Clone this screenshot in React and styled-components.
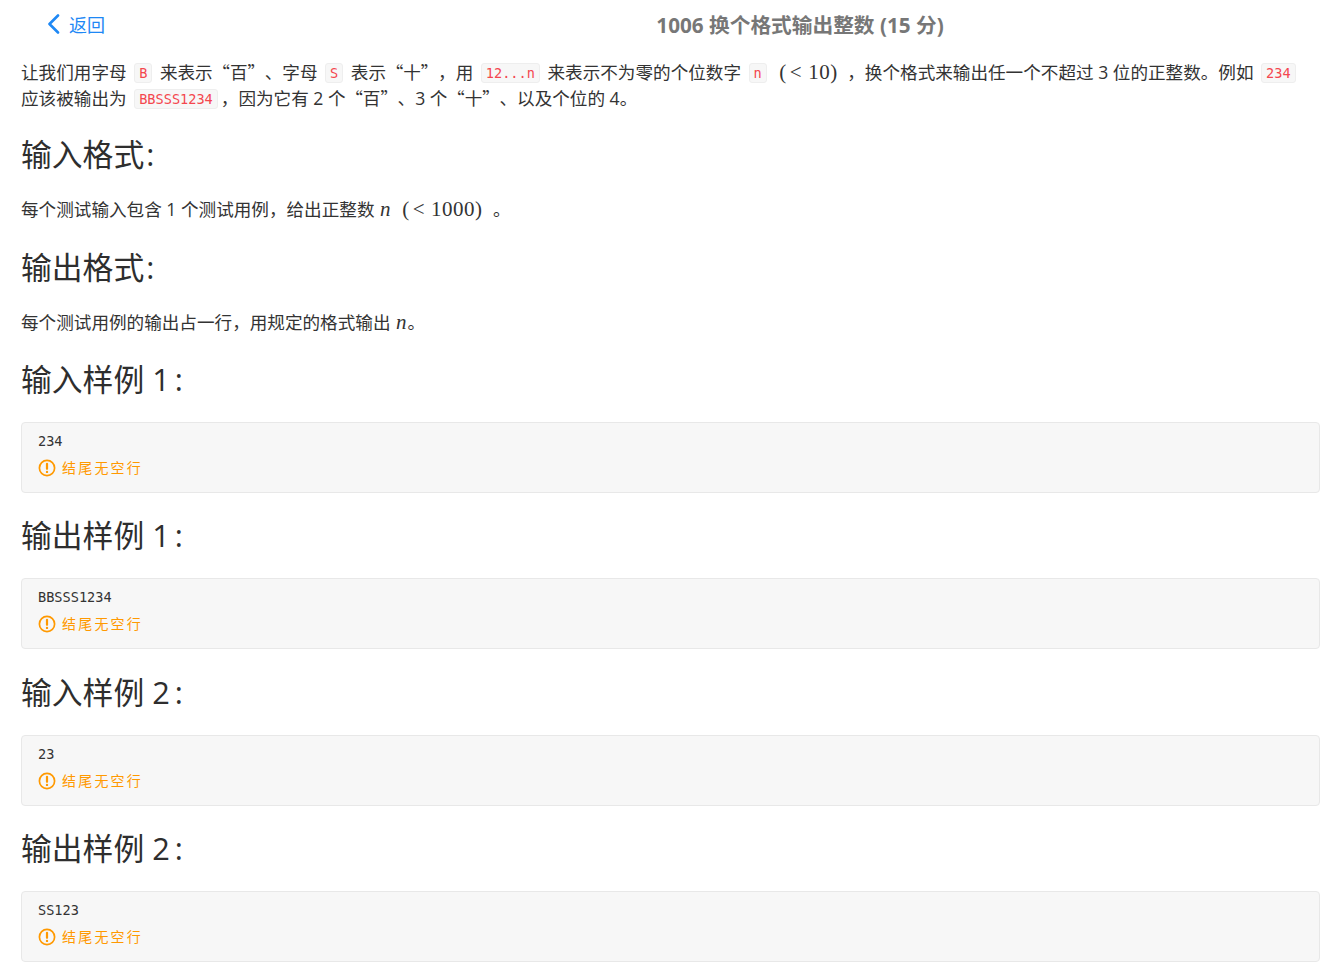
import React from 'react'
import styled, { createGlobalStyle } from 'styled-components'

const Global = createGlobalStyle`
html, body {
  margin: 0;
  padding: 0;
  background: #fff;
}
body {
  font-family: "Open Sans", "Noto Sans CJK SC", sans-serif;
  color: #333;
}
`

const Page = styled.div`
width: 1330px;
`

const Header = styled.header`
display: flex;
align-items: center;
height: 47px;
`

const Back = styled.a`
width: 223px;
padding-left: 47px;
display: flex;
align-items: center;
gap: 8px;
font-size: 18px;
color: #1e88f5;
`

const Title = styled.h1`
flex: 1;
margin: 0;
text-align: center;
font-size: 20.7px;
font-weight: 700;
color: #777;
`

const Content = styled.main`
padding: 12px 10px 0 21px;
`

const Para = styled.p`
margin: 1px 0 0;
padding-bottom: ${p => (p.$tall ? 2.2 : 0.7)}px;
font-size: 17.6px;
line-height: 25px;
color: #333;
text-spacing-trim: space-all;
`

const Lead = styled(Para)`
margin-top: 0;
`

const Heading = styled.h2`
margin: 21.33px 0 22px;
height: 42px;
line-height: 42px;
font-size: 30.8px;
font-weight: 400;
color: #2e2e2e;
`

const Colon = styled.span`
margin-left: ${p => p.$gap}px;
`

const Code = styled.code`
display: inline-block;
height: 20px;
line-height: 18px;
box-sizing: border-box;
padding: 0 4px;
margin: 0 3px;
vertical-align: 1px;
font-family: "DejaVu Sans Mono", monospace;
font-size: 13.6px;
color: #f4474f;
background: #f7f7f7;
border: 1px solid #eee;
border-radius: 3px;
`

const Quote = styled.span`
font-family: "Noto Sans CJK SC", sans-serif;
margin: 0 -0.4px;
`

const Math = styled.span`
font-family: "Liberation Serif", serif;
font-size: 21px;
line-height: 20px;
letter-spacing: ${p => (p.$italic ? 0 : 0.5)}px;
font-style: ${p => (p.$italic ? 'italic' : 'normal')};
margin: 0 ${p => p.$pad || 0}px;
`

const Rel = styled.span`
margin: 0 6px 0 3px;
`

const Sample = styled.div`
height: 71px;
box-sizing: border-box;
padding: 8px 16px 0;
background: #f7f7f7;
border: 1px solid #e8e8e8;
border-radius: 4px;
`

const SampleText = styled.div`
height: 20px;
line-height: 20px;
font-family: "DejaVu Sans Mono", monospace;
font-size: 13.6px;
color: #333;
`

const Note = styled.div`
display: flex;
align-items: center;
gap: 6px;
margin-top: 6px;
font-family: "Noto Sans CJK SC", sans-serif;
font-size: 14px;
letter-spacing: 2.2px;
color: #f90;
`

const NoteIcon = styled.svg`
margin-top: 2px;
`

const samples = [
  { title: '输入样例 1', text: '234' },
  { title: '输出样例 1', text: 'BBSSS1234' },
  { title: '输入样例 2', text: '23' },
  { title: '输出样例 2', text: 'SS123' },
]

const ChevronLeft = () => (
  <svg width="14" height="20" viewBox="0 0 14 20" fill="none">
    <path d="M11 1.5 L2.5 10 L11 18.5" stroke="#1e88f5" strokeWidth="2.6" strokeLinecap="round" strokeLinejoin="round" />
  </svg>
)

const AlertIcon = () => (
  <NoteIcon width="18" height="18" viewBox="0 0 18 18" fill="none">
    <circle cx="9" cy="9" r="7.6" stroke="#f90" strokeWidth="1.7" />
    <path d="M9 4.8 V9.8" stroke="#f90" strokeWidth="2.2" strokeLinecap="round" />
    <circle cx="9" cy="12.9" r="1.2" fill="#f90" />
  </NoteIcon>
)

const App = () => {
  return (
    <Page>
      <Global />
      <Header>
        <Back><ChevronLeft />返回</Back>
        <Title>1006 换个格式输出整数 (15 分)</Title>
      </Header>
      <Content>
        <Lead>
          让我们用字母 <Code>B</Code> 来表示<Quote>“百”</Quote>、字母 <Code>S</Code> 表示<Quote>“十”</Quote>，用 <Code>12...n</Code> 来表示不为零的个位数字 <Code>n</Code> <Math $pad={5}>(<Rel>&lt;</Rel>10)</Math> ，换个格式来输出任一个不超过 3 位的正整数。例如 <Code>234</Code><br />
          应该被输出为 <Code>BBSSS1234</Code>，因为它有 2 个<Quote>“百”</Quote>、3 个<Quote>“十”</Quote>、以及个位的 4。
        </Lead>
        <Heading>输入格式<Colon $gap={2}>:</Colon></Heading>
        <Para $tall>
          每个测试输入包含 1 个测试用例，给出正整数 <Math $italic $pad={1}>n</Math> <Math $pad={6}>(<Rel>&lt;</Rel>1000)</Math> 。
        </Para>
        <Heading>输出格式<Colon $gap={2}>:</Colon></Heading>
        <Para $tall>
          每个测试用例的输出占一行，用规定的格式输出 <Math $italic $pad={1}>n</Math>。
        </Para>
        {samples.map(s => (
          <React.Fragment key={s.title}>
            <Heading>{s.title}<Colon $gap={5}>:</Colon></Heading>
            <Sample>
              <SampleText>{s.text}</SampleText>
              <Note><AlertIcon />结尾无空行</Note>
            </Sample>
          </React.Fragment>
        ))}
      </Content>
    </Page>
  )
}

export default App
